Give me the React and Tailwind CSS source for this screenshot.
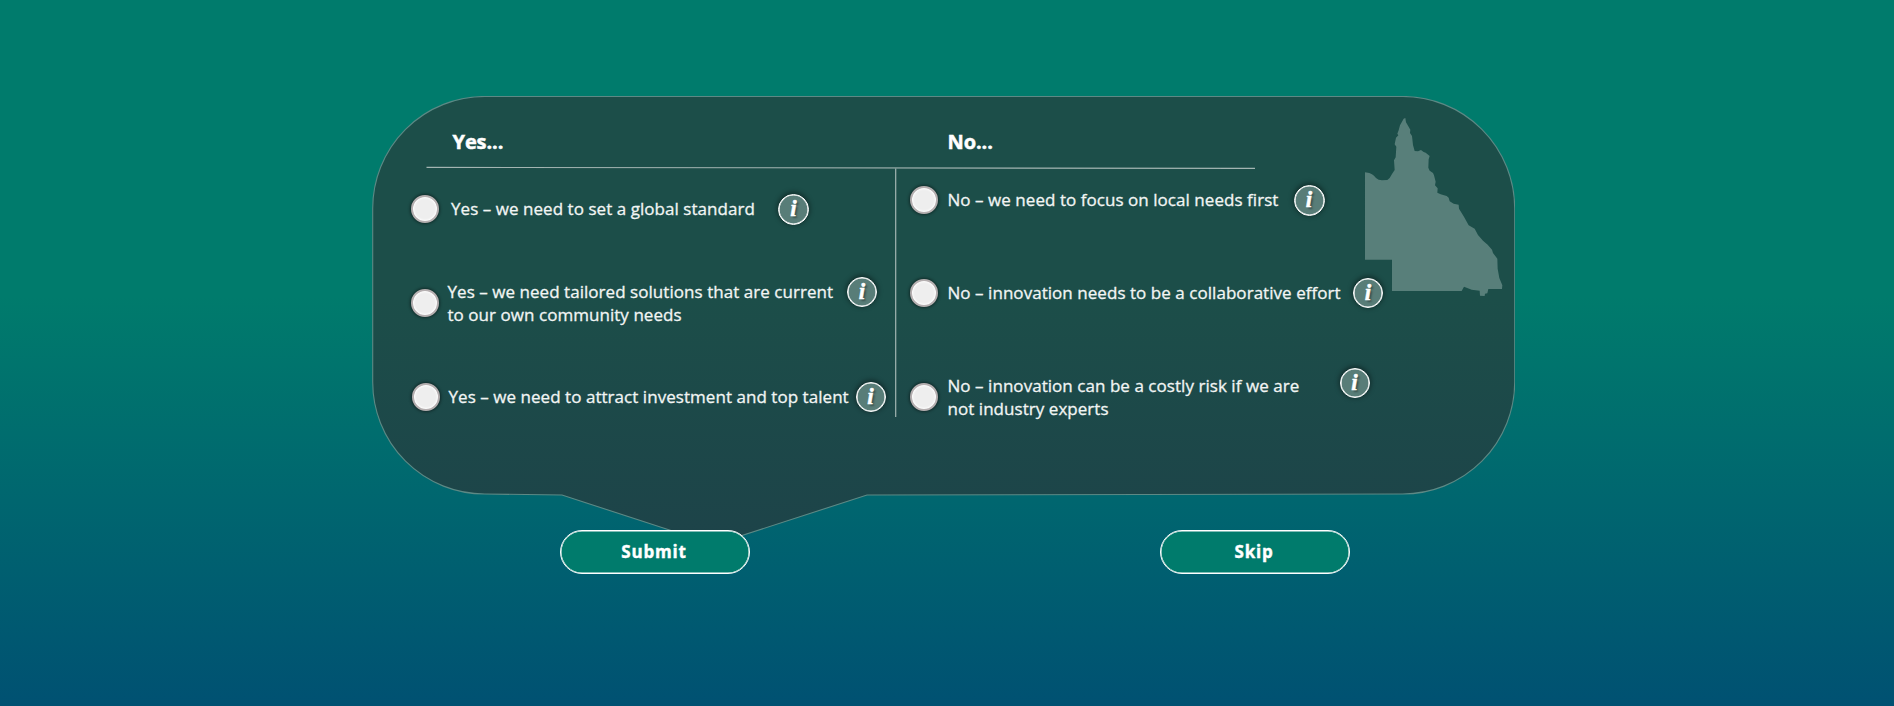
const QLD =
  'M45 202L58 204L66 208L72 212L78 219L86 224L96 226L112 225L119 219L126 207L134 195L132 166L137 157L139 125L134 118L138 98L145 91L142 86L146 76L150 61L161 41L166 39L168 52L175 64L181 74L180 84L186 93L189 120L194 138L204 139L213 135L221 141L227 143L239 153L236 163L235 188L239 197L249 204L252 211L257 230L255 241L263 250L262 263L272 268L290 273L296 278L299 289L311 296L326 299L327 311L341 334L356 361L374 371L384 390L399 407L413 419L426 434L429 444L442 461L443 491L448 519L457 541L456 552L415 552L412 565L405 566L404 573L390 572L389 557L365 554L342 545L335 558L126 558L126 464L45 464Z'

function Radio() {
  return (
    <button
      aria-label="Select answer"
      className="size-[28px] shrink-0 rounded-full border-2 border-[#b5afb0] bg-[#eeeeee] shadow-[0_0_3px_1px_rgba(0,0,0,0.45),inset_0_0_2px_1px_#ffffff]"
    />
  )
}

function Info({ className }) {
  return (
    <button
      aria-label="More information"
      className={`flex shrink-0 items-center justify-center rounded-full border border-white bg-[#587d78] pb-px font-['Liberation_Serif',serif] text-[23px] leading-none font-bold text-white italic shadow-[inset_0_0_0_0.6px_#ffffff,0_-1px_5px_1px_rgba(0,0,0,0.4)] [-webkit-text-stroke:0.5px_white] [text-shadow:2px_2px_2px_rgba(0,0,0,0.35)] ${className}`}
    >
      i
    </button>
  )
}

function Option({ row, text, info, children }) {
  return (
    <div className={`flex items-center ${row}`}>
      <Radio />
      <p className={`shrink-0 tracking-[0.045px] whitespace-nowrap [-webkit-text-stroke:0.3px_#f2f5f4] ${text}`}>{children}</p>
      <Info className={info} />
    </div>
  )
}

function Action({ children }) {
  return (
    <button className="h-[44px] w-[190px] rounded-[22px] border border-white bg-[#007b6c] pr-[2px] pb-px text-[17px] font-bold tracking-[0.8px] text-white shadow-[inset_0_0_0_0.5px_#ffffff] [-webkit-text-stroke:0.4px_white]">
      {children}
    </button>
  )
}

export default function App() {
  return (
    <main className="flex h-[706px] w-[1894px] flex-col overflow-hidden bg-[linear-gradient(180deg,#007b6c_0%,#007b6c_42%,#005172_100%)] pt-24 font-['Open_Sans','Noto_Sans',sans-serif] text-[17px] leading-[23px] font-medium text-[#f2f5f4]">
      <section className="relative ml-[372px] h-[434px] w-[1143px]">
        <svg className="absolute top-0 left-0" width="1143" height="455" viewBox="372 96 1143 455">
          <defs>
            <linearGradient id="bubble" gradientUnits="userSpaceOnUse" x1="0" y1="96" x2="0" y2="545">
              <stop offset="0" stopColor="#1c4e49" />
              <stop offset="0.45" stopColor="#1c4e49" />
              <stop offset="1" stopColor="#1d4349" />
            </linearGradient>
          </defs>
          <path
            d="M484.7 96.5H1402.7A112 112 0 0 1 1514.7 208.5V382A112 112 0 0 1 1402.7 494L867 495L714 544.5L562 495L484.7 494A112 112 0 0 1 372.7 382V208.5A112 112 0 0 1 484.7 96.5Z"
            fill="url(#bubble)"
            stroke="#5d8985"
            strokeWidth="1.1"
          />
          <path d="M426.5 167.4L1255 168.3M895.7 168V417" stroke="#a3b5b2" strokeWidth="1.2" />
          <path d={QLD} fill="#587f7a" transform="translate(1350 105) scale(0.33333)" />
        </svg>
        <div className="relative flex">
          <div className="w-[524px]">
            <h2 className="flex h-[72px] items-center pt-[18px] pl-[80.5px] text-[20px] font-bold tracking-[-0.1px] text-white [-webkit-text-stroke:0.5px_white]">
              Yes...
            </h2>
            <Option row="h-[82px] pl-[38.5px]" text="ml-[12.5px] w-[327px] pb-[2px]" info="size-[31px]">
              Yes – we need to set a global standard
            </Option>
            <Option row="h-[106px] pl-[38.5px]" text="ml-[9px] w-[399.5px]" info="size-[30px] mb-[22px]">
              Yes – we need tailored solutions that are current
              <br />
              to our own community needs
            </Option>
            <Option row="h-[82px] pl-[39.5px]" text="ml-[9px] w-[407px] pb-[2px]" info="size-[30px]">
              Yes – we need to attract investment and top talent
            </Option>
          </div>
          <div className="w-[600px]">
            <h2 className="flex h-[72px] items-center pt-[18px] pl-[51.5px] text-[20px] font-bold tracking-[-0.1px] text-white [-webkit-text-stroke:0.5px_white]">
              No...
            </h2>
            <Option row="h-[64px] pl-[14px]" text="ml-[9.5px] w-[346px] pb-[2px]" info="size-[31px]">
              No – we need to focus on local needs first
            </Option>
            <Option row="h-[122px] pl-[14px]" text="ml-[9.5px] w-[405.5px] pb-[2px]" info="size-[30px]">
              No – innovation needs to be a collaborative effort
            </Option>
            <Option row="h-[86px] pl-[14px]" text="ml-[9.5px] w-[392px]" info="size-[30px] mb-[29px]">
              No – innovation can be a costly risk if we are
              <br />
              not industry experts
            </Option>
          </div>
        </div>
      </section>
      <div className="relative ml-[560px] flex gap-[410px]">
        <Action>Submit</Action>
        <Action>Skip</Action>
      </div>
    </main>
  )
}
